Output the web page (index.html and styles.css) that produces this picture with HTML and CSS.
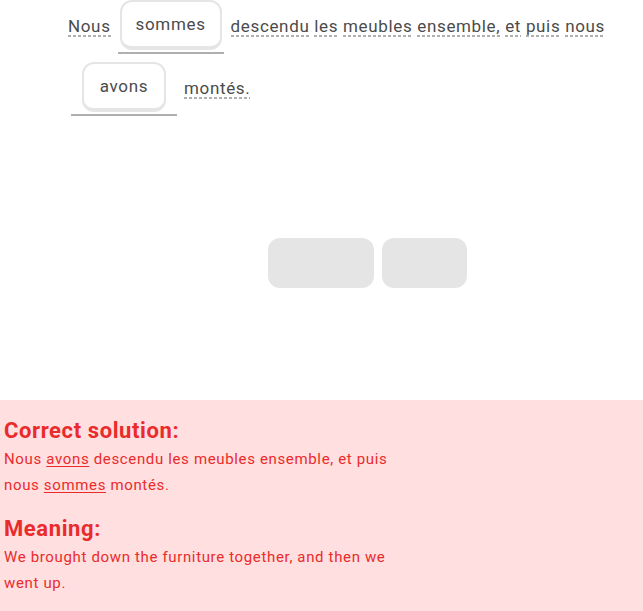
FILE: index.html
```html
<!DOCTYPE html>
<html lang="fr">
<head>
<meta charset="utf-8">
<link rel="stylesheet" href="styles.css">
</head>
<body>
<main class="challenge">
  <div class="sentence">
    <span class="words"><span class="w">Nous</span></span>
    <span class="slot"><span class="chip">sommes</span></span>
    <span class="words"><span class="w">descendu</span> <span class="w">les</span> <span class="w">meubles</span> <span class="w">ensemble,</span> <span class="w">et</span> <span class="w">puis</span> <span class="w">nous</span></span>
    <span class="slot"><span class="chip">avons</span></span>
    <span class="words"><span class="w">montés.</span></span>
  </div>
  <div class="bank">
    <span class="ghost wide"></span>
    <span class="ghost narrow"></span>
  </div>
</main>
<section class="feedback">
  <h2 class="fb-title">Correct solution:</h2>
  <p class="fb-text">Nous <u>avons</u> descendu les meubles ensemble, et puis nous <u>sommes</u> montés.</p>
  <h2 class="fb-title">Meaning:</h2>
  <p class="fb-text">We brought down the furniture together, and then we went up.</p>
</section>
</body>
</html>
```
FILE: styles.css
```css
html, body {
  margin: 0;
  padding: 0;
  background: #fff;
}
body {
  font-family: Roboto, "Noto Sans", sans-serif;
  color: #4b4b4b;
  letter-spacing: 0.65px;
  height: 611px;
  display: flex;
  flex-direction: column;
}
.challenge {
  flex: 1;
}
.sentence {
  display: flex;
  flex-wrap: wrap;
  align-items: flex-start;
  column-gap: 4px;
  row-gap: 8px;
  padding-left: 68px;
  width: 560px;
  font-size: 17px;
}
.words {
  padding-top: 15px;
  line-height: 22px;
  white-space: nowrap;
}
.w {
  display: inline-block;
  background: linear-gradient(to right, #afafaf 60%, transparent 0) left bottom / 5px 2px repeat-x;
}
.slot {
  width: 106px;
  height: 54px;
  margin: 0 3px;
  border-bottom: 2px solid #afafaf;
  box-sizing: border-box;
  display: flex;
  justify-content: center;
}
.chip {
  height: 50px;
  box-sizing: border-box;
  padding: 0 14px;
  border: 2px solid #e5e5e5;
  border-bottom-width: 4px;
  border-radius: 12px;
  display: flex;
  align-items: center;
  justify-content: center;
  min-width: 84px;
  color: #4b4b4b;
}
.slot:first-of-type .chip {
  width: 106px;
}
.bank {
  display: flex;
  gap: 8px;
  margin-top: 122px;
  padding-left: 268px;
}
.ghost {
  height: 50px;
  border-radius: 12px;
  background: #e5e5e5;
}
.ghost.wide { width: 106px; }
.ghost.narrow { width: 85px; }
.feedback {
  height: 211px;
  box-sizing: border-box;
  background: #ffdfe0;
  color: #ea2b2b;
  padding: 16px 4px 0;
}
.fb-title {
  margin: 0;
  font-size: 22px;
  font-weight: 700;
  line-height: 30px;
  letter-spacing: 0.6px;
}
.fb-text {
  margin: 0 0 16px;
  max-width: 400px;
  font-size: 15px;
  line-height: 26px;
}
.fb-text u {
  text-decoration-thickness: 1px;
  text-underline-offset: 2px;
}
```
